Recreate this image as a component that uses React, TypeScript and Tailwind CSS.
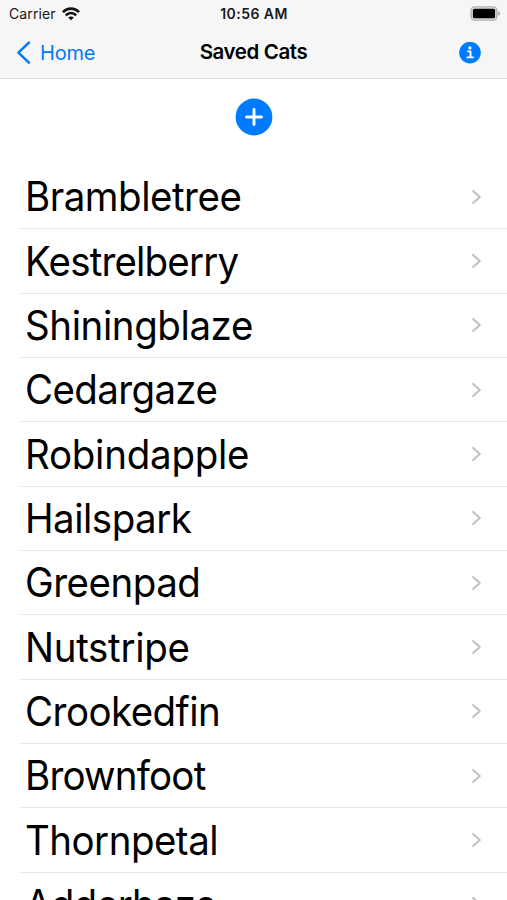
type Cat = {
  name: string;
  tracking: string;
};

const cats: Cat[] = [
  { name: "Brambletree", tracking: "tracking-[-0.5px]" },
  { name: "Kestrelberry", tracking: "tracking-[-0.85px]" },
  { name: "Shiningblaze", tracking: "tracking-[-0.42px]" },
  { name: "Cedargaze", tracking: "tracking-[-0.66px]" },
  { name: "Robindapple", tracking: "tracking-[-0.25px]" },
  { name: "Hailspark", tracking: "tracking-[-0.52px]" },
  { name: "Greenpad", tracking: "tracking-[-0.5px]" },
  { name: "Nutstripe", tracking: "tracking-[-0.3px]" },
  { name: "Crookedfin", tracking: "tracking-[-0.56px]" },
  { name: "Brownfoot", tracking: "tracking-[-0.82px]" },
  { name: "Thornpetal", tracking: "tracking-[-0.54px]" },
  { name: "Adderhaze", tracking: "tracking-[-0.88px]" },
];

const WifiIcon = () => (
  <svg width="18" height="14" viewBox="0 0 18 14" fill="none" stroke="#111" strokeWidth="2.6">
    <path d="M0.9 5.1C5.4 0.4 12.6 0.4 17.1 5.1" />
    <path d="M3.8 8.3C6.7 5.3 11.3 5.3 14.2 8.3" />
    <path d="M9 13.3L6.2 10.5C7.7 9 10.3 9 11.8 10.5Z" fill="#111" stroke="none" />
  </svg>
);

const BatteryIcon = () => (
  <svg width="31" height="15" viewBox="0 0 31 15" fill="none">
    <rect x="1" y="0.9" width="26" height="13.2" rx="3.8" fill="#dcdcdc" stroke="#b0b0b0" strokeWidth="1.4" />
    <rect x="2.9" y="2.8" width="22.2" height="9.4" rx="1.6" fill="#000" />
    <path d="M28.3 5.2C30.6 6 30.6 9 28.3 9.8Z" fill="#a5a5a5" />
  </svg>
);

const BackIcon = () => (
  <svg width="15" height="24" viewBox="0 0 15 24" fill="none">
    <path
      d="M12.9 1.6L2.4 11.6L12.9 21.6"
      stroke="#007aff"
      strokeWidth="2.6"
      strokeLinecap="round"
      strokeLinejoin="round"
    />
  </svg>
);

const InfoIcon = () => (
  <svg width="22" height="22" viewBox="0 0 22 22" fill="none">
    <circle cx="11" cy="10.6" r="10.8" fill="#007aff" />
    <circle cx="10.9" cy="5.9" r="1.6" fill="#fff" />
    <path d="M8.9 9.4H11.5V15.4M8.4 15.4H14" stroke="#fff" strokeWidth="1.9" strokeLinecap="round" strokeLinejoin="round" />
  </svg>
);

const PlusIcon = () => (
  <svg width="38" height="38" viewBox="0 0 38 38" fill="none">
    <circle cx="19" cy="19" r="18.4" fill="#007aff" />
    <path d="M19 11.5V26.5M11.5 19H26.5" stroke="#fff" strokeWidth="2.9" strokeLinecap="round" />
  </svg>
);

const ChevronIcon = () => (
  <svg width="12" height="18" viewBox="0 0 12 18" fill="none">
    <path d="M2.2 2.9L8.8 9L2.2 15.1" stroke="#c1c1c4" strokeWidth="2.1" strokeLinecap="round" strokeLinejoin="round" />
  </svg>
);

export default function App() {
  return (
    <div className="flex h-[900px] w-[507px] flex-col overflow-hidden bg-white font-['Inter',sans-serif] text-black">
      <header className="h-[79px] shrink-0 border-b border-[#dedede] bg-[#f6f6f6]">
        {/* status bar */}
        <div className="grid h-[27px] grid-cols-3 items-center pl-[9px] pr-[6px] text-[#181818]">
          <div className="flex items-center gap-[6px]">
            <span className="text-[14px] tracking-[0.12px]">Carrier</span>
            <WifiIcon />
          </div>
          <span className="pr-[2px] text-center text-[14px] font-semibold tracking-[0.45px]">10:56 AM</span>
          <div className="flex justify-end">
            <BatteryIcon />
          </div>
        </div>

        {/* navigation bar */}
        <div className="grid h-[51px] grid-cols-3 items-center pl-4 pr-[26px]">
          <button className="flex items-center gap-[9px] text-[#007aff]">
            <BackIcon />
            <span className="text-[20px] tracking-[-0.2px]">Home</span>
          </button>
          <h1 className="pl-[10px] text-center text-[20.5px] font-semibold tracking-[-0.4px] whitespace-nowrap">
            Saved Cats
          </h1>
          <button aria-label="Info" className="flex justify-end">
            <InfoIcon />
          </button>
        </div>
      </header>

      <div className="flex h-[86px] shrink-0 justify-center pt-[19px]">
        <button aria-label="Add cat" className="h-[38px]">
          <PlusIcon />
        </button>
      </div>

      <ul>
        {cats.map((cat) => (
          <li key={cat.name} className="ml-5 flex h-[64.33px] items-center justify-between border-b border-[#e6e6e7] pl-[5px] pr-[24px]">
            <span className={`origin-left scale-x-95 pt-[2px] text-[40.5px] leading-none ${cat.tracking}`}>{cat.name}</span>
            <ChevronIcon />
          </li>
        ))}
      </ul>
    </div>
  );
}
